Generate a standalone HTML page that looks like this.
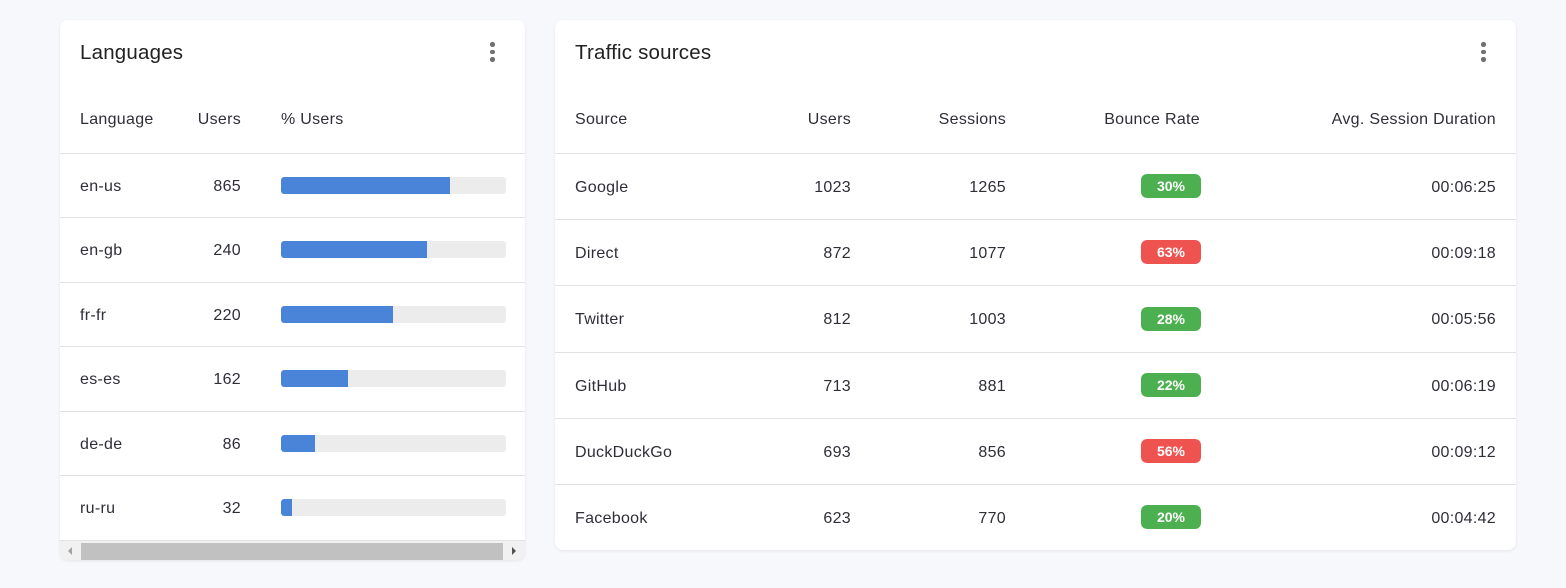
<!DOCTYPE html>
<html><head><meta charset="utf-8"><style>
*{margin:0;padding:0;box-sizing:border-box}
body{width:1566px;height:588px;background:#f7f8fc;font-family:"Liberation Sans",sans-serif;color:#2e2e36;font-size:16px;letter-spacing:0.3px;position:relative;overflow:hidden}
.card{position:absolute;background:#fff;border-radius:8px;box-shadow:0 1px 3px rgba(0,0,0,.08);overflow:hidden}
.t{position:absolute;white-space:nowrap;line-height:20px;margin-top:2px}
.r{text-align:right}
.h{position:absolute;height:1px;background:#e2e2e4;left:0;right:0}
.title{font-size:20.5px;color:#222;letter-spacing:0.2px;margin-top:4px}
.dots{position:absolute;width:4px}
.dots i{display:block;width:4.5px;height:4.5px;border-radius:50%;background:#707070;margin-bottom:3px}
.bar{position:absolute;left:221px;width:225px;height:17px;background:#ececec;border-radius:3px;overflow:hidden}
.bar b{display:block;height:100%;background:#4a84d9;border-radius:3px 0 0 3px}
.badge{position:absolute;left:586px;width:60px;height:24px;border-radius:6px;color:#fff;font-size:14px;font-weight:bold;letter-spacing:0;text-align:center;line-height:24px}
.g{background:#4caf50}.red{background:#ef5350}
</style></head><body>
<div class="card" style="left:60px;top:20px;width:465px;height:540px">
<div class="t title" style="left:20px;top:19px">Languages</div>
<div class="dots" style="left:430px;top:22px"><i></i><i></i><i></i></div>
<div class="t" style="left:20px;top:88px">Language</div>
<div class="t r" style="left:120px;width:61px;top:88px">Users</div>
<div class="t" style="left:221px;top:88px">% Users</div>
<div class="h" style="top:133px"></div>
<div class="t" style="left:20px;top:155px">en-us</div><div class="t r" style="left:120px;width:61px;top:155px">865</div><div class="bar" style="top:157px"><b style="width:169px"></b></div>
<div class="h" style="top:197px"></div>
<div class="t" style="left:20px;top:219px">en-gb</div><div class="t r" style="left:120px;width:61px;top:219px">240</div><div class="bar" style="top:221px"><b style="width:146px"></b></div>
<div class="h" style="top:262px"></div>
<div class="t" style="left:20px;top:284px">fr-fr</div><div class="t r" style="left:120px;width:61px;top:284px">220</div><div class="bar" style="top:286px"><b style="width:112px"></b></div>
<div class="h" style="top:326px"></div>
<div class="t" style="left:20px;top:348px">es-es</div><div class="t r" style="left:120px;width:61px;top:348px">162</div><div class="bar" style="top:350px"><b style="width:67px"></b></div>
<div class="h" style="top:391px"></div>
<div class="t" style="left:20px;top:413px">de-de</div><div class="t r" style="left:120px;width:61px;top:413px">86</div><div class="bar" style="top:415px"><b style="width:34px"></b></div>
<div class="h" style="top:455px"></div>
<div class="t" style="left:20px;top:477px">ru-ru</div><div class="t r" style="left:120px;width:61px;top:477px">32</div><div class="bar" style="top:479px"><b style="width:11px"></b></div>
<div class="h" style="top:520px"></div>
<div style="position:absolute;left:0;top:521px;width:465px;height:19px;background:#f1f1f1"></div>
<div style="position:absolute;left:21px;top:523px;width:422px;height:17px;background:#c1c1c1"></div>
<div style="position:absolute;left:8px;top:527px;width:0;height:0;border-top:4px solid transparent;border-bottom:4px solid transparent;border-right:4px solid #a3a3a3"></div>
<div style="position:absolute;left:452px;top:527px;width:0;height:0;border-top:4px solid transparent;border-bottom:4px solid transparent;border-left:4px solid #505050"></div>
</div>

<div class="card" style="left:555px;top:20px;width:961px;height:530px">
<div class="t title" style="left:20px;top:19px">Traffic sources</div>
<div class="dots" style="left:926px;top:22px"><i></i><i></i><i></i></div>
<div class="t" style="left:20px;top:88px">Source</div>
<div class="t r" style="left:196px;width:100px;top:88px">Users</div>
<div class="t r" style="left:351px;width:100px;top:88px">Sessions</div>
<div class="t r" style="left:545px;width:100px;top:88px">Bounce Rate</div>
<div class="t r" style="left:641px;width:300px;top:88px">Avg. Session Duration</div>
<div class="h" style="top:133px"></div>

<div class="t" style="left:20px;top:156px">Google</div><div class="t r" style="left:196px;width:100px;top:156px">1023</div><div class="t r" style="left:351px;width:100px;top:156px">1265</div><div class="badge g" style="top:154px">30%</div><div class="t r" style="left:641px;width:300px;top:156px">00:06:25</div>
<div class="h" style="top:199px"></div>
<div class="t" style="left:20px;top:222px">Direct</div><div class="t r" style="left:196px;width:100px;top:222px">872</div><div class="t r" style="left:351px;width:100px;top:222px">1077</div><div class="badge red" style="top:220px">63%</div><div class="t r" style="left:641px;width:300px;top:222px">00:09:18</div>
<div class="h" style="top:265px"></div>
<div class="t" style="left:20px;top:288px">Twitter</div><div class="t r" style="left:196px;width:100px;top:288px">812</div><div class="t r" style="left:351px;width:100px;top:288px">1003</div><div class="badge g" style="top:287px">28%</div><div class="t r" style="left:641px;width:300px;top:288px">00:05:56</div>
<div class="h" style="top:332px"></div>
<div class="t" style="left:20px;top:355px">GitHub</div><div class="t r" style="left:196px;width:100px;top:355px">713</div><div class="t r" style="left:351px;width:100px;top:355px">881</div><div class="badge g" style="top:353px">22%</div><div class="t r" style="left:641px;width:300px;top:355px">00:06:19</div>
<div class="h" style="top:398px"></div>
<div class="t" style="left:20px;top:421px">DuckDuckGo</div><div class="t r" style="left:196px;width:100px;top:421px">693</div><div class="t r" style="left:351px;width:100px;top:421px">856</div><div class="badge red" style="top:419px">56%</div><div class="t r" style="left:641px;width:300px;top:421px">00:09:12</div>
<div class="h" style="top:464px"></div>
<div class="t" style="left:20px;top:487px">Facebook</div><div class="t r" style="left:196px;width:100px;top:487px">623</div><div class="t r" style="left:351px;width:100px;top:487px">770</div><div class="badge g" style="top:485px">20%</div><div class="t r" style="left:641px;width:300px;top:487px">00:04:42</div>
</div>
</body></html>
